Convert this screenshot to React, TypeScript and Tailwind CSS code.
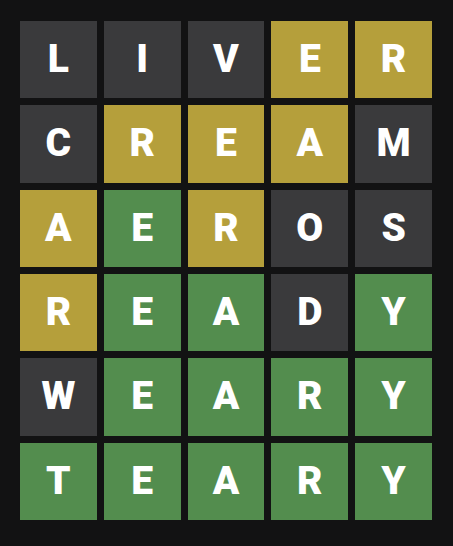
import React from 'react';

type Mark = 'absent' | 'present' | 'correct';

const rows: { word: string; marks: Mark[] }[] = [
  { word: 'LIVER', marks: ['absent', 'absent', 'absent', 'present', 'present'] },
  { word: 'CREAM', marks: ['absent', 'present', 'present', 'present', 'absent'] },
  { word: 'AEROS', marks: ['present', 'correct', 'present', 'absent', 'absent'] },
  { word: 'READY', marks: ['present', 'correct', 'correct', 'absent', 'correct'] },
  { word: 'WEARY', marks: ['absent', 'correct', 'correct', 'correct', 'correct'] },
  { word: 'TEARY', marks: ['correct', 'correct', 'correct', 'correct', 'correct'] },
];

const tileColor: Record<Mark, string> = {
  absent: 'bg-[#3a3a3c]',
  present: 'bg-[#b59f3b]',
  correct: 'bg-[#538d4e]',
};

const Tile: React.FC<{ letter: string; mark: Mark }> = ({ letter, mark }) => {
  return (
    <div
      className={`${tileColor[mark]} flex items-center justify-center text-white font-black text-[39px] leading-none`}
    >
      {letter}
    </div>
  );
};

export default function App() {
  return (
    <div
      className="w-[453px] h-[546px] bg-[#121213] pl-[20px] pt-[21px]"
      style={{ fontFamily: 'Roboto, "Liberation Sans", Arial, sans-serif' }}
    >
      <div className="grid grid-cols-5 grid-rows-6 gap-[7px] w-[412px] h-[499px]">
        {rows.map((row, r) =>
          row.word.split('').map((ch, i) => <Tile key={`${r}-${i}`} letter={ch} mark={row.marks[i]} />)
        )}
      </div>
    </div>
  );
}
